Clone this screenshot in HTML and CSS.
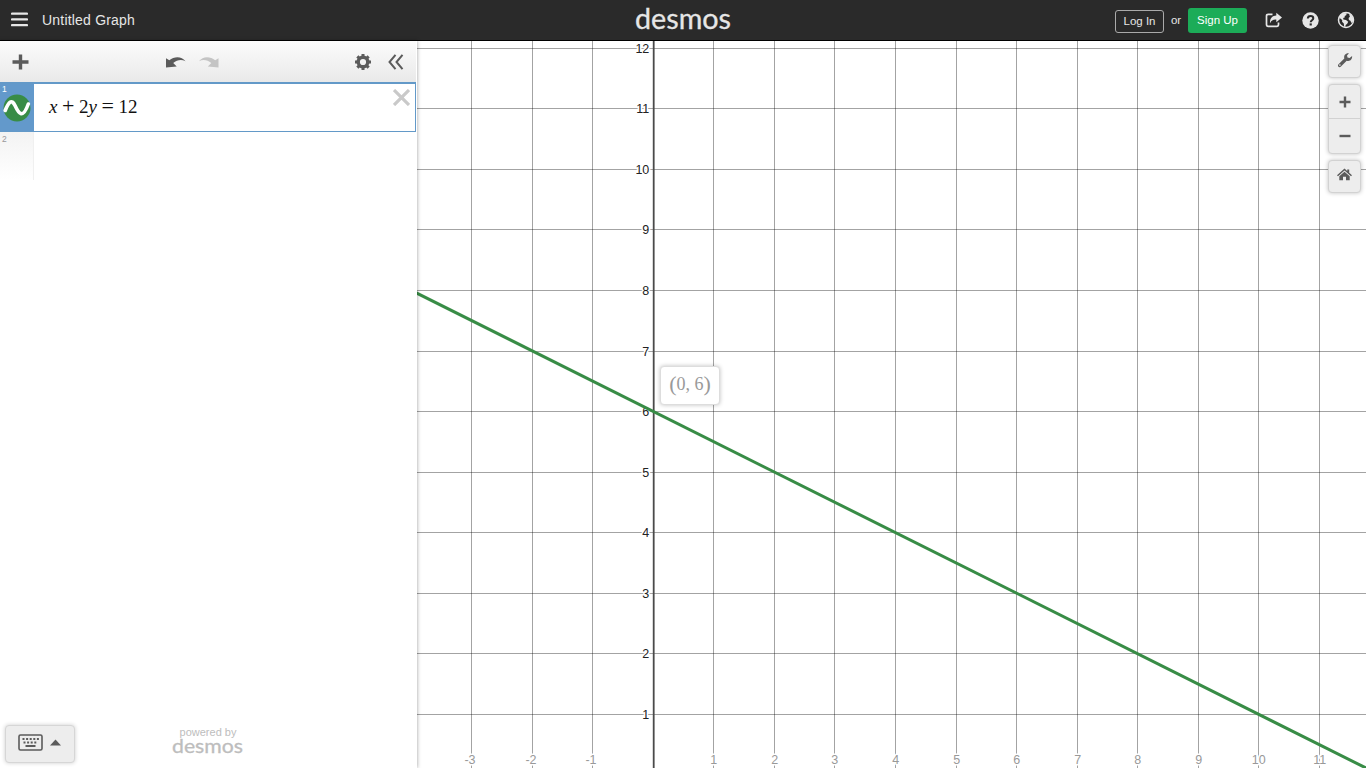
FILE: index.html
```
<!DOCTYPE html>
<html lang="en">
<head>
    <meta charset="UTF-8">
    <meta name="viewport" content="width=device-width, initial-scale=1.0">
    <title>Untitled Graph</title>
    <link rel="stylesheet" href="styles.css">
</head>
<body>
    <header class="header">
        <div class="header-left">
            <svg class="menu-icon" width="17" height="15" viewBox="0 0 17 15"><path d="M1 1.7h15M1 7.4h15M1 13.1h15" stroke="#e6e6e6" stroke-width="2.2" stroke-linecap="round"/></svg>
            <span class="graph-title">Untitled Graph</span>
        </div>
        <svg class="logo" width="98" height="40" viewBox="0 0 98 40"><text x="1" y="28.5" textLength="96" lengthAdjust="spacingAndGlyphs">desmos</text></svg>
        <div class="header-right">
            <button class="login">Log In</button>
            <span class="or">or</span>
            <button class="signup">Sign Up</button>
            <svg class="share-icon" width="18" height="16" viewBox="0 0 18 16">
                <path d="M7.5 2.3H3.2Q1.500 2.300 1.500 4v8.600q0 1.700 1.700 1.700h8.600q1.700 0 1.700-1.700v-2" fill="none" stroke="#e6e6e6" stroke-width="1.700"/>
                <path d="M11.300 0.800L17 5.500l-5.700 4.800V7.600C8 7.400 6.300 8.500 5 11.300 4.700 6.800 7 3.600 11.300 3.400z" fill="#e6e6e6"/>
            </svg>
            <svg class="help-icon" width="17" height="17" viewBox="0 0 17 17">
                <circle cx="8.500" cy="8.500" r="8.200" fill="#e6e6e6"/>
                <path d="M5.800 6.500C5.900 4.700 7 4 8.500 4s2.800.8 2.800 2.300c0 1.900-2.600 1.900-2.600 3.900" fill="none" stroke="#2a2a2a" stroke-width="2"/>
                <rect x="7.600" y="11.400" width="2.200" height="2.100" fill="#2a2a2a"/>
            </svg>
            <svg class="globe-icon" width="18" height="18" viewBox="0 0 18 18">
                <circle cx="9" cy="9" r="7.500" fill="none" stroke="#e6e6e6" stroke-width="1.500"/>
                <path d="M3 4.500L6.500 2l3.300.3-.6 1.900-1.600.7.300 1.300-1.700.8.200 1.500 2.600.4 2.200 1.800-1 2-1.500 1.300-.5 2.300-1.100-.7-.3-3.200-1.700-1.700.1-1.700L3 7.200zM12 3l2.500 1.400 1.600 3-.1 3.100-1.500 1.600-1.100-2.300-1.500-.7-.3-2.200 1.300-1.200z" fill="#e6e6e6"/>
            </svg>
        </div>
    </header>

    <main class="main">
        <aside class="sidebar">
            <div class="toolbar">
                <svg class="add-icon" width="17" height="16" viewBox="0 0 17 16"><path d="M8.500 0.500v15M0.500 8h16" stroke="#5b5b5b" stroke-width="3.400"/></svg>
                <svg class="undo-icon" width="20" height="13" viewBox="0 0 20 13"><path d="M0 2.300l3.300 2C8 .2 15.500-.3 19.500 5.200 15.500 3.200 11 3.800 7.200 7l3.500 3.600L0 11.500z" fill="#5b5b5b"/></svg>
                <svg class="redo-icon" width="20" height="13" viewBox="0 0 20 13"><path d="M19.500 2.300l-3.300 2C11.500.2 4-.3 0 5.200 4 3.200 8.500 3.800 12.300 7l-3.500 3.600 10.700.9z" fill="#c4c4c4"/></svg>
                <svg class="gear-icon" width="18" height="18" viewBox="0 0 18 18">
                    <circle cx="9" cy="9" r="4.800" fill="none" stroke="#5b5b5b" stroke-width="3.400"/>
                    <path d="M9 1v3M9 14v3M1 9h3M14 9h3M3.350 3.350l2 2M12.650 12.650l2 2M3.350 14.650l2-2M12.650 5.350l2-2" stroke="#5b5b5b" stroke-width="3"/>
                </svg>
                <svg class="collapse-icon" width="16" height="16" viewBox="0 0 16 16"><path d="M7.500 .8L1.500 8l6 7.200M14.500.8L8.500 8l6 7.200" fill="none" stroke="#5b5b5b" stroke-width="2"/></svg>
            </div>

            <div class="expression selected">
                <div class="tab">
                    <span class="index">1</span>
                    <svg class="curve-icon" width="28" height="28" viewBox="0 0 28 28">
                        <circle cx="14" cy="14" r="13.500" fill="#388c46"/>
                        <path d="M2.200 16.500C5.500 8 8.500 4.500 12 11.500 15.500 19 19.500 26 25.300 10" fill="none" stroke="#fff" stroke-width="3.600" stroke-linecap="round"/>
                    </svg>
                </div>
                <div class="math"><i>x</i><span class="op">+</span>2<i>y</i><span class="op">=</span>12</div>
                <svg class="close-icon" width="17" height="17" viewBox="0 0 17 17"><path d="M1 1l15 15M16 1L1 16" stroke="#c9c9c9" stroke-width="3.200"/></svg>
            </div>
            <div class="expression empty">
                <div class="tab"><span class="index">2</span></div>
            </div>

            <div class="sidebar-footer">
                <button class="keypad">
                    <svg width="25" height="17" viewBox="0 0 25 17">
                        <rect x="1" y="1" width="23" height="15" rx="1.500" fill="none" stroke="#5b5b5b" stroke-width="1.600"/>
                        <path d="M4.500 5h17M5.500 8.500h14" stroke="#5b5b5b" stroke-width="2" stroke-dasharray="2 1.600"/>
                        <path d="M7.500 12h10" stroke="#5b5b5b" stroke-width="2"/>
                    </svg>
                    <svg width="11" height="7" viewBox="0 0 11 7"><path d="M0 6.500L5.500 .5l5.500 6z" fill="#5b5b5b"/></svg>
                </button>
                <div class="powered">
                    <span>powered by</span>
                    <svg class="logo small" width="72" height="22" viewBox="0 0 72 22"><text x="0" y="14.500" textLength="71" lengthAdjust="spacingAndGlyphs">desmos</text></svg>
                </div>
            </div>
        </aside>

        <section class="graph">
            <svg id="grapher" width="949" height="727" viewBox="417 41 949 727">
                <g id="grid"></g>
                <line class="axis" x1="653.700" y1="41" x2="653.700" y2="768"/>
                <g id="labels"></g>
                <path class="curve" d="M411 290.250L1371 770.500"/>
            </svg>
            <div class="point-label"><span class="paren">(</span>0, 6<span class="paren">)</span></div>
            <div class="controls">
                <button class="control">
                    <svg width="16" height="16" viewBox="0 0 16 16"><path d="M1.300 12.400l6-6C6.500 3.300 8.700.7 12 1.200L10 3.500l.5 2 2.100.6 2.500-2C15.400 7.500 13 9.800 9.700 8.800l-6 6c-1.600 1.200-3.600-.8-2.400-2.400z" fill="#5b5b5b"/><circle cx="2.900" cy="13.100" r=".8" fill="#ededed"/></svg>
                </button>
                <div class="zoom">
                    <button><svg width="12" height="12" viewBox="0 0 12 12"><path d="M6 .5v11M.5 6h11" stroke="#5b5b5b" stroke-width="2.400"/></svg></button>
                    <button><svg width="12" height="12" viewBox="0 0 12 12"><path d="M.5 6h11" stroke="#5b5b5b" stroke-width="2.400"/></svg></button>
                </div>
                <button class="control">
                    <svg width="15" height="13" viewBox="0 0 15 13"><path d="M7.500.5l2.700 2.400V1.500h2v3.200L15 7.200l-1 1L7.500 2.600 1 8.200l-1-1z" fill="#5b5b5b"/><path d="M2.300 8.200l5.200-4.500 5.200 4.500v4H9V8.800H6v3.400H2.300z" fill="#5b5b5b"/></svg>
                </button>
            </div>
        </section>
    </main>

    <script>
        const originX = 653.2;
        const originY = 775;
        const unit = 60.57;
        let lines = '';
        let labels = '';

        for (let i = -3; i <= 11; i++) {
            if (i === 0) continue;
            const x = Math.floor(originX + i * unit) + 0.5;
            lines += `<line x1="${x}" y1="41" x2="${x}" y2="768"/>`;
            labels += `<text class="x-label" x="${i < 0 ? x - 1.5 : x + 0.3}" y="763.5">${i}</text>`;
        }

        for (let i = 1; i <= 12; i++) {
            const y = Math.floor(originY - i * unit) + 0.5;
            lines += `<line x1="417" y1="${y}" x2="1366" y2="${y}"/>`;
            labels += `<text class="y-label" x="649.3" y="${y + 4}">${i}</text>`;
        }

        document.getElementById('grid').innerHTML = lines;
        document.getElementById('labels').innerHTML = labels;
    </script>
</body>
</html>
```
FILE: styles.css
```
* {
    box-sizing: border-box;
}

body {
    margin: 0;
    height: 100vh;
    overflow: hidden;
    display: flex;
    flex-direction: column;
    font-family: "Liberation Sans", Arial, sans-serif;
    background: #fff;
}

svg {
    display: block;
    flex-shrink: 0;
}

button {
    font-family: inherit;
    padding: 0;
    margin: 0;
}

.header {
    height: 41px;
    flex-shrink: 0;
    display: grid;
    grid-template-columns: 1fr 98px 1fr;
    background: #2a2a2a;
    border-bottom: 1px solid #000;
    color: #e6e6e6;
}

.header-left {
    display: flex;
    align-items: center;
    padding: 0 0 1px 11px;
    gap: 14px;
}

.graph-title {
    font-size: 14px;
    letter-spacing: 0.2px;
}

.logo {
    overflow: visible;
    font-family: Lato, sans-serif;
    font-size: 28px;
    fill: #e6e6e6;
    stroke: #e6e6e6;
    stroke-width: 0.3px;
}

.header-right {
    display: flex;
    align-items: center;
    justify-content: flex-end;
    padding-right: 11px;
}

.login {
    width: 49px;
    height: 23px;
    margin-top: 2px;
    background: none;
    border: 1px solid #aaa;
    border-radius: 3px;
    color: #e6e6e6;
    font-size: 11.5px;
}

.or {
    width: 24px;
    text-align: center;
    font-size: 11.5px;
}

.signup {
    width: 59px;
    height: 25px;
    margin-top: 1px;
    padding-bottom: 1px;
    background: #1cac58;
    border: none;
    border-radius: 3px;
    color: #fff;
    font-size: 11.5px;
}

.share-icon {
    margin-left: 18px;
}

.help-icon {
    margin-left: 19px;
}

.globe-icon {
    margin-left: 18px;
}

.main {
    flex: 1;
    display: flex;
    min-height: 0;
}

.sidebar {
    width: 417px;
    padding-right: 1px;
    flex-shrink: 0;
    display: flex;
    flex-direction: column;
    background: #fff;
    box-shadow: 0 0 4px rgba(0, 0, 0, 0.4);
    z-index: 1;
}

.toolbar {
    height: 41px;
    display: flex;
    align-items: center;
    padding: 1px 12px 0 12px;
    background: linear-gradient(#fcfcfc, #e9e9e9);
}

.undo-icon {
    margin-left: 137px;
}

.redo-icon {
    margin-left: 13px;
}

.gear-icon {
    margin-left: auto;
    margin-right: 16px;
}

.expression {
    display: flex;
}

.tab {
    width: 34px;
    flex-shrink: 0;
}

.index {
    display: block;
    padding-left: 2px;
    font-size: 8.5px;
    line-height: 10px;
}

.selected {
    height: 50px;
    border: 1px solid #6399c8;
    border-top-width: 2px;
    border-left: none;
}

.selected .tab {
    background: #6399cb;
    color: #fff;
}

.curve-icon {
    margin-left: 3px;
}

.math {
    flex: 1;
    padding: 12px 0 0 15px;
    font-family: "Liberation Serif", "Times New Roman", serif;
    font-size: 19px;
    line-height: 22px;
    color: #111;
}

.math .op {
    display: inline-block;
    width: 21.5px;
    text-align: center;
    font-size: 22px;
    line-height: 20px;
}

.close-icon {
    margin: 5px 5px 0 0;
}

.empty .tab {
    height: 48px;
    padding-top: 2px;
    background: linear-gradient(#f3f3f3, #fff);
    border-right: 1px solid #f0f0f0;
    color: #999;
}

.sidebar-footer {
    margin-top: auto;
    display: flex;
    align-items: flex-end;
    padding: 0 0 5px 5px;
}

.keypad {
    display: flex;
    align-items: center;
    gap: 7px;
    width: 70px;
    height: 38px;
    padding: 0 0 4px 12px;
    background: #ededed;
    border: 1px solid #d6d6d6;
    border-radius: 4px;
    box-shadow: 0 0 4px rgba(0, 0, 0, 0.2);
}

.powered {
    margin-left: 97px;
    margin-bottom: 3px;
    width: 72px;
    text-align: center;
    font-size: 11px;
    line-height: 12px;
    color: #bdbdbd;
}

.logo.small {
    font-size: 20px;
    fill: #bdbdbd;
    stroke: #bdbdbd;
}

.graph {
    position: relative;
    flex: 1;
}

#grid line {
    stroke: #000;
    stroke-opacity: 0.36;
    stroke-width: 1;
}

.axis {
    stroke: #4a4a4a;
    stroke-width: 1.8;
}

#labels text {
    font-size: 12.5px;
    stroke: #fff;
    stroke-width: 3px;
    stroke-linejoin: round;
    paint-order: stroke;
}

.x-label {
    text-anchor: middle;
    fill: #999;
}

.y-label {
    text-anchor: end;
    fill: #222;
}

.curve {
    fill: none;
    stroke: #388c46;
    stroke-width: 3;
}

.point-label {
    position: absolute;
    left: 243px;
    top: 325px;
    width: 60px;
    height: 39px;
    padding-bottom: 3px;
    display: flex;
    align-items: center;
    justify-content: center;
    background: #fff;
    border: 1px solid #ddd;
    border-radius: 4px;
    box-shadow: 0 0 4px rgba(0, 0, 0, 0.25);
    font-family: "Liberation Serif", "Times New Roman", serif;
    font-size: 18px;
    color: #999;
}

.paren {
    font-size: 22px;
}

.controls {
    position: absolute;
    top: 4px;
    right: 5px;
    width: 33px;
    display: flex;
    flex-direction: column;
    gap: 6px;
}

.control,
.zoom {
    background: #ededed;
    border: 1px solid #d2d2d2;
    border-radius: 4px;
    box-shadow: 0 0 4px rgba(0, 0, 0, 0.25);
}

.control {
    display: flex;
    align-items: center;
    justify-content: center;
    height: 33px;
    padding-bottom: 4px;
}

.zoom {
    height: 70px;
    display: flex;
    flex-direction: column;
}

.zoom button {
    height: 33px;
    display: flex;
    align-items: center;
    justify-content: center;
    background: none;
    border: none;
}

.zoom button + button {
    height: 35px;
    border-top: 1px solid #d2d2d2;
}
```
